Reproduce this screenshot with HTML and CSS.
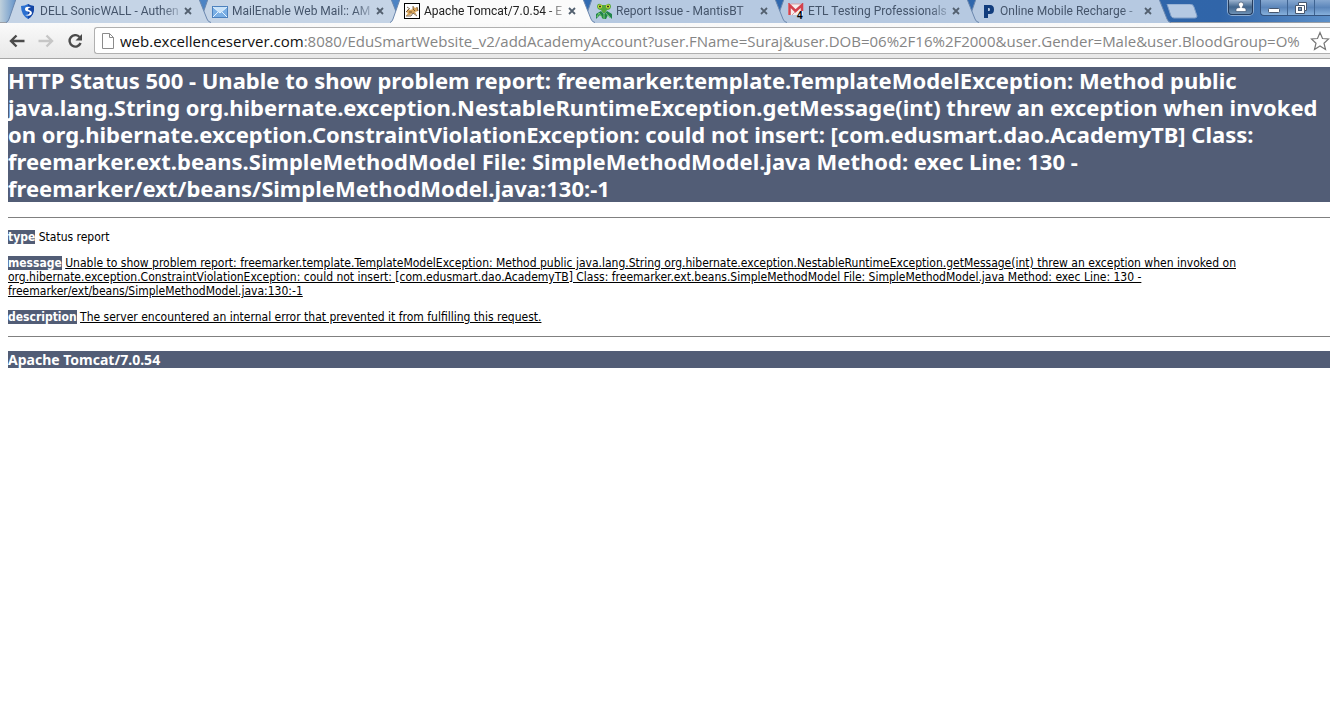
FILE: index.html
```html
<!DOCTYPE html>
<html lang="en">
<head>
<meta charset="utf-8">
<title>Apache Tomcat/7.0.54 - Error report</title>
<link rel="stylesheet" href="styles.css">
</head>
<body>
<svg class="defs" aria-hidden="true">
  <symbol id="tab-shape" viewBox="0 0 206 23"><path class="fill" d="M0 23Q2 22 3 19L10 -1H193L201 19Q202 22 205 23Z"/><path class="edge" d="M0 22.500Q2 22 3 19L10 -1M193 -1L201 19Q202 22 205 22.500"/></symbol>
  <symbol id="cross" viewBox="0 0 8 8"><path d="M1 1L7 7M7 1L1 7" stroke="currentColor" stroke-width="1.800"/></symbol>
</svg>
<header class="browser">
  <div class="strip">
    <nav class="tabs" aria-label="Tabs">
      <div class="tab t1">
        <svg class="shape"><use href="#tab-shape"/></svg>
        <svg class="icon" viewBox="0 0 16 16"><path d="M1 3Q5 3 8 1Q11 3 14 3Q15 12 8 16Q1 12 1 3Z" fill="#2b6fd0"/><path d="M8 1Q11 3 14 3Q15 12 8 16Z" fill="#1546a5"/><path d="M11 4Q5 3 5 6Q5 8 8 8.500Q11 9 9 11Q8 12 5 12Q11 14 12 10Q12 8 9 7Q6 6 11 4Z" fill="#fff"/></svg>
        <a class="title" href="#">DELL SonicWALL - Authen</a>
        <button class="close" aria-label="Close tab"><svg><use href="#cross"/></svg></button>
      </div>
      <div class="tab t2">
        <svg class="shape"><use href="#tab-shape"/></svg>
        <svg class="icon" viewBox="0 0 16 16"><rect x=".5" y="3.500" width="15" height="11" fill="#79aee4" stroke="#4b80bd"/><path d="M1 4L8 10L15 4Z" fill="#c9e2f8"/><path d="M1 4L8 10L15 4M1 14L6 9M15 14L10 9" fill="none" stroke="#e4f2ff"/></svg>
        <a class="title" href="#">MailEnable Web Mail:: AM</a>
        <button class="close" aria-label="Close tab"><svg><use href="#cross"/></svg></button>
      </div>
      <div class="tab t3 active">
        <svg class="shape"><use href="#tab-shape"/></svg>
        <svg class="icon" viewBox="0 0 16 16"><rect x=".5" y=".5" width="15" height="15" fill="#fff" stroke="#000"/><path d="M2 9L4 6L6 7L9 6L9 3L11 5L13 4L14 8L11 9L13 12L9 10L6 12L2 13L4 10Z" fill="#d8a65d"/><path d="M2 9L5 6M9 3V6L11 8M13 4L14 8M2 13H7L9 10L13 13M5 9H8M3 4L6 6" stroke="#63482c" stroke-width=".8" fill="none"/></svg>
        <a class="title" href="#">Apache Tomcat/7.0.54 - E</a>
        <button class="close" aria-label="Close tab"><svg><use href="#cross"/></svg></button>
      </div>
      <div class="tab t4">
        <svg class="shape"><use href="#tab-shape"/></svg>
        <svg class="icon" viewBox="0 0 16 16"><path d="M1 3Q2 -1 6 2H10Q14 -1 15 3Q15 7 11 7L9 10H7L5 7Q1 7 1 3Z" fill="#55a83c"/><circle cx="4" cy="3.500" r="2" fill="#d8e23d"/><circle cx="12" cy="3.500" r="2" fill="#d8e23d"/><circle cx="4" cy="3.500" r="1" fill="#222"/><circle cx="12" cy="3.500" r="1" fill="#222"/><path d="M0 16V11L5 8L8 11L11 8L16 11V16L12 12L10 16H7L4 12Z" fill="#21844a"/><path d="M1 14L3 10L6 14M10 10L14 15M8 11V16" stroke="#7cd06f" fill="none"/></svg>
        <a class="title" href="#">Report Issue - MantisBT</a>
        <button class="close" aria-label="Close tab"><svg><use href="#cross"/></svg></button>
      </div>
      <div class="tab t5">
        <svg class="shape"><use href="#tab-shape"/></svg>
        <svg class="icon" viewBox="0 0 16 16"><path d="M0 1H15V12H0Z" fill="#f5eeee"/><path d="M1.500 12V2L7.500 8L14 2V8" fill="none" stroke="#d3424d" stroke-width="2.500"/><path d="M3 1H13M4 12L7 9" stroke="#db9ba0"/><text x="9" y="16" class="count">4</text></svg>
        <a class="title" href="#">ETL Testing Professionals .</a>
        <button class="close" aria-label="Close tab"><svg><use href="#cross"/></svg></button>
      </div>
      <div class="tab t6">
        <svg class="shape"><use href="#tab-shape"/></svg>
        <svg class="icon" viewBox="0 0 16 16"><path fill-rule="evenodd" d="M4 2H10Q14 2 14 6.500Q14 11 10 11H8V15H4ZM8 5V8H9Q10 8 10 6.500Q10 5 9 5Z" fill="#123d7d"/></svg>
        <a class="title" href="#">Online Mobile Recharge -</a>
        <button class="close" aria-label="Close tab"><svg><use href="#cross"/></svg></button>
      </div>
      <button class="new-tab" aria-label="New tab"><svg viewBox="0 0 32 15"><path d="M1 0H24Q27 0 28 3L31 12Q31 14 29 14H8Q6 14 5 12Z" fill="#b5c9e3" stroke="#7e9dc7"/></svg></button>
    </nav>
    <div class="window-controls">
      <button class="user" aria-label="User"><svg viewBox="0 0 12 12"><path d="M1 10.500V8Q2 6.500 5 6.500Q3.500 5 3.500 3.500Q3.500 1 6 1Q8.500 1 8.500 3.500Q8.500 5 7 6.500Q10 6.500 11 8V10.500Z" fill="#fff" stroke="#465a75" stroke-width=".7"/></svg></button>
      <div class="group">
        <button aria-label="Minimize"><svg viewBox="0 0 12 12"><rect x=".5" y="6.500" width="11" height="4" rx="1" fill="#fff" stroke="#46566d"/></svg></button>
        <button aria-label="Restore"><svg viewBox="0 0 12 12"><path d="M3.500 .5H11.500V8.500H9.500V11.500H.5V3.500H3.500Z" fill="#fff" stroke="#46566d"/><path d="M3.500 3.500H9.500V8.500" fill="none" stroke="#46566d"/><rect x="3.500" y="5.500" width="3" height="3" fill="#7798bd" stroke="#46566d"/></svg></button>
        <button aria-label="Close window"></button>
      </div>
    </div>
  </div>
  <div class="toolbar">
    <button class="nav" aria-label="Back"><svg viewBox="0 0 16 14"><path d="M15.500 7H2M7.500 1.500L2 7L7.500 12.500" fill="none" stroke="#4b4b4b" stroke-width="2.400"/></svg></button>
    <button class="nav" aria-label="Forward"><svg viewBox="0 0 16 14"><path d="M.5 7H14M8.500 1.500L14 7L8.500 12.500" fill="none" stroke="#c6c6c6" stroke-width="2.400"/></svg></button>
    <button class="nav" aria-label="Reload"><svg viewBox="0 0 16 14"><path d="M12.500 3A5.700 5.700 0 1 0 13.600 9" fill="none" stroke="#4b4b4b" stroke-width="2.400"/><path d="M15 0V6.500H8.500Z" fill="#4b4b4b"/></svg></button>
    <div class="omnibox">
      <svg class="page" viewBox="0 0 12 16"><path d="M.5 .5H7.500L11.500 4.500V15.500H.5ZM7.500 .5V4.500H11.500" fill="#fff" stroke="#8b8b8b"/></svg>
      <div class="url" role="textbox" contenteditable="true" spellcheck="false" aria-label="Address"><span class="host">web.excellenceserver.com</span>:8080/EduSmartWebsite_v2/addAcademyAccount?user.FName=Suraj&amp;user.DOB=06%2F16%2F2000&amp;user.Gender=Male&amp;user.BloodGroup=O%</div>
      <button class="star" aria-label="Bookmark"><svg viewBox="0 0 20 20"><path d="M10 1.500L12.500 7.500L18.500 8L14 12.200L15.500 18.500L10 15L4.500 18.500L6 12.200L1.500 8L7.500 7.500Z" fill="#fff" stroke="#777" stroke-width="1.200"/></svg></button>
    </div>
  </div>
</header>
<main class="report">
  <h1>HTTP Status 500 - Unable to show problem report: freemarker.template.TemplateModelException: Method public<br>java.lang.String org.hibernate.exception.NestableRuntimeException.getMessage(int) threw an exception when invoked<br>on org.hibernate.exception.ConstraintViolationException: could not insert: [com.edusmart.dao.AcademyTB] Class:<br>freemarker.ext.beans.SimpleMethodModel File: SimpleMethodModel.java Method: exec Line: 130 -<br>freemarker/ext/beans/SimpleMethodModel.java:130:-1</h1>
  <hr>
  <p><b>type</b> Status report</p>
  <p><b>message</b> <u>Unable to show problem report: freemarker.template.TemplateModelException: Method public java.lang.String org.hibernate.exception.NestableRuntimeException.getMessage(int) threw an exception when invoked on<br>org.hibernate.exception.ConstraintViolationException: could not insert: [com.edusmart.dao.AcademyTB] Class: freemarker.ext.beans.SimpleMethodModel File: SimpleMethodModel.java Method: exec Line: 130 -<br>freemarker/ext/beans/SimpleMethodModel.java:130:-1</u></p>
  <p><b>description</b> <u>The server encountered an internal error that prevented it from fulfilling this request.</u></p>
  <hr>
  <h3>Apache Tomcat/7.0.54</h3>
</main>
</body>
</html>
```
FILE: styles.css
```css
body { margin: 0; background: #fff; color: #000; overflow: hidden; }
button { border: 0; padding: 0; background: none; display: flex; align-items: center; justify-content: center; }
.defs { position: absolute; width: 0; height: 0; }

.browser { font-family: "Open Sans", "Noto Sans", sans-serif; }
.strip {
  display: flex; justify-content: space-between; height: 23px;
  background: linear-gradient(90deg, #bfd0dc 0, #4c83c4 20px, #4c83c4 400px, #2f69b0 600px, #3065a9 1220px, #5c8fc8 100%);
  border-bottom: 1px solid #9a9fa6; box-sizing: border-box;
}
.tabs { display: flex; padding-left: 6px; }
.tab { position: relative; display: flex; align-items: center; width: 192px; height: 22px; padding: 0 4px 0 14px; box-sizing: border-box; color: #45556b; }
.tab > * { position: relative; flex: none; }
.tab > .shape { position: absolute; left: 0; top: 0; width: 206px; height: 23px; overflow: hidden; }
.shape { fill: #b6c9e1; }
.edge { fill: none; stroke: #6b87ad; stroke-width: 1; }
.t1 .shape, .t2 .shape { fill: #c5d4e6; }
.t1 { z-index: 6; } .t2 { z-index: 5; } .t3 { z-index: 7; } .t4 { z-index: 4; } .t5 { z-index: 3; } .t6 { z-index: 2; }
.active { color: #222; }
.active .shape { fill: #fbfbfb; }
.icon { width: 16px; height: 16px; }
.count { font: bold 10px "Liberation Sans", sans-serif; fill: #000; }
.title {
  width: 140px; margin-left: 4px; overflow: hidden; white-space: nowrap; color: inherit; text-decoration: none; font-family: Roboto, sans-serif; font-size: 12px; line-height: 22px;
  -webkit-mask-image: linear-gradient(90deg, #000 122px, transparent 146px); mask-image: linear-gradient(90deg, #000 122px, transparent 146px);
}
.close { width: 16px; height: 16px; color: #53606f; }
.close svg { width: 8px; height: 8px; }
.new-tab { align-self: flex-start; margin: 4px 0 0 8px; }
.new-tab svg { width: 32px; height: 15px; }

.window-controls { display: flex; gap: 7px; align-items: flex-start; }
.window-controls button { height: 15px; box-sizing: border-box; }
.window-controls svg { width: 12px; height: 12px; }
.user { width: 25px; border: 1px solid #253c5d; border-top: 0; border-radius: 0 0 4px 4px; background: linear-gradient(#9cb4d0, #42678f 50%, #6e91b5); box-shadow: 0 0 0 1px #8cabd0; }
.group { display: flex; border: 1px solid #35547f; border-top: 0; border-right: 0; border-radius: 0 0 0 4px; background: linear-gradient(#86a8d0, #5c86ba 50%, #86b0dc); }
.group button { width: 27px; border-right: 1px solid #3f6492; }
.group button:last-child { width: 15px; border-right: 0; }

.toolbar { display: flex; align-items: center; height: 36px; padding-left: 3px; box-sizing: border-box; background: linear-gradient(#fafafa, #e8e8e8); border-bottom: 1px solid #a6a6a6; }
.nav { width: 28px; height: 28px; margin-right: 1px; }
.nav svg { width: 16px; height: 14px; }
.omnibox { display: flex; align-items: center; flex: 1; min-width: 0; height: 27px; margin-left: 4px; padding-left: 7px; box-sizing: border-box; background: #fff; border: 1px solid #b0b0b0; border-right: 0; border-radius: 3px 0 0 3px; }
.page { width: 12px; height: 16px; flex: none; }
.url { flex: 1; min-width: 0; margin-left: 6px; overflow: hidden; white-space: nowrap; font-size: 15px; line-height: 24px; color: #858585; }
.host { color: #111; }
.star { flex: none; width: 20px; height: 24px; }
.star svg { width: 20px; height: 20px; }

.report { padding: 8px 0 8px 8px; font-family: "DejaVu Sans Condensed", "Noto Sans", sans-serif; white-space: nowrap; }
h1, h3, b { background: #525d76; color: #fff; }
h1, h3 { font-family: "Noto Sans", sans-serif; }
h1 { margin: 0 0 15px; font-size: 22px; line-height: 27px; }
hr { height: 1px; margin: 0; border: 0; background: #808080; }
p { margin: 12px 0; font-size: 12px; line-height: 14px; }
h3 { margin: 14px 0; font-size: 14px; line-height: 17px; }
```
